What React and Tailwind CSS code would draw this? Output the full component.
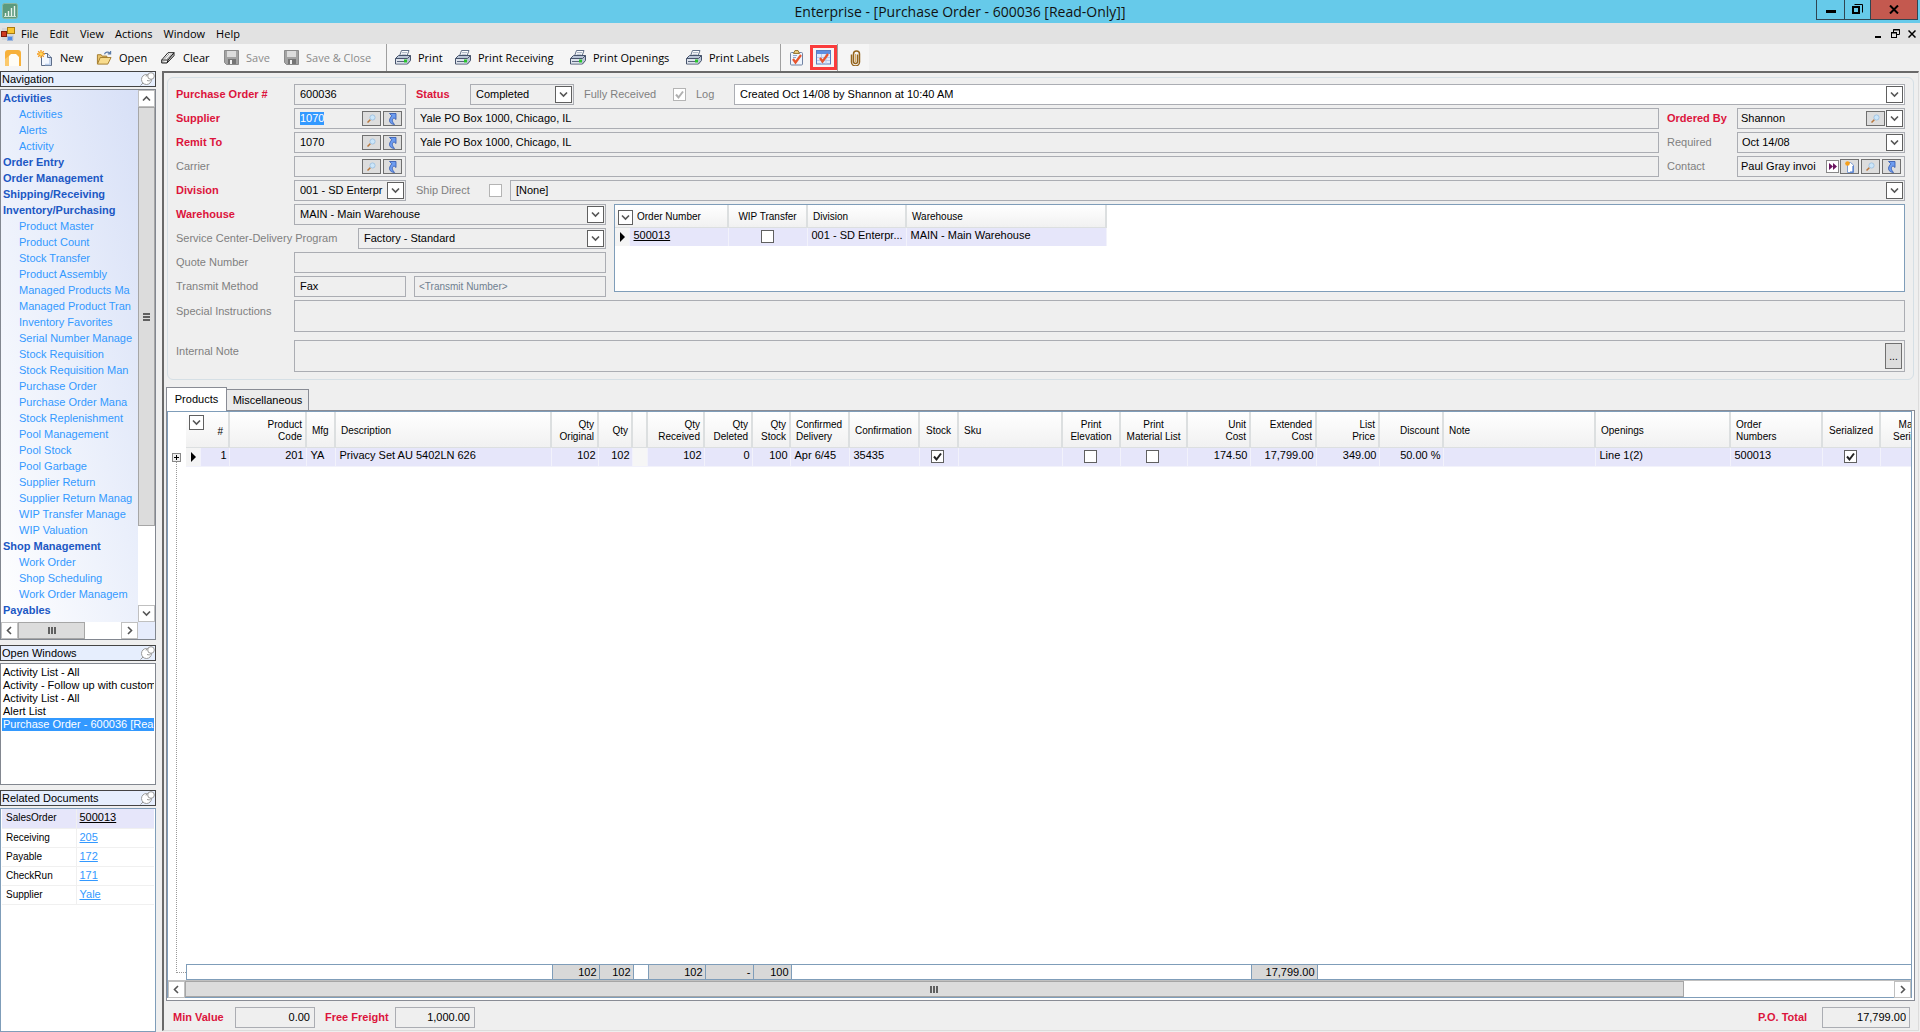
import React, { useEffect, useRef } from 'react'

const NAV = [
  ['Activities', ['Activities', 'Alerts', 'Activity']],
  ['Order Entry', []],
  ['Order Management', []],
  ['Shipping/Receiving', []],
  ['Inventory/Purchasing', [
    'Product Master', 'Product Count', 'Stock Transfer', 'Product Assembly', 'Managed Products Ma',
    'Managed Product Tran', 'Inventory Favorites', 'Serial Number Manage', 'Stock Requisition',
    'Stock Requisition Man', 'Purchase Order', 'Purchase Order Mana', 'Stock Replenishment',
    'Pool Management', 'Pool Stock', 'Pool Garbage', 'Supplier Return', 'Supplier Return Manag',
    'WIP Transfer Manage', 'WIP Valuation',
  ]],
  ['Shop Management', ['Work Order', 'Shop Scheduling', 'Work Order Managem']],
  ['Payables', []],
  ['Receivable Special', []],
]

const OPEN_WINDOWS = [
  'Activity List - All',
  'Activity - Follow up with custome',
  'Activity List - All',
  'Alert List',
  'Purchase Order - 600036 [Read',
]

const RELATED = [
  ['SalesOrder', '500013'],
  ['Receiving', '205'],
  ['Payable', '172'],
  ['CheckRun', '171'],
  ['Supplier', 'Yale'],
]

// label lines, column width, alignment, row value, total
const COLUMNS = [
  { head: ['Product', 'Code'], w: 77, align: 'right', value: '201' },
  { head: ['Mfg'], w: 29, align: 'left', value: 'YA' },
  { head: ['Description'], w: 216, align: 'left', value: 'Privacy Set AU 5402LN 626' },
  { head: ['Qty', 'Original'], w: 47, align: 'right', value: '102', total: '102' },
  { head: ['Qty'], w: 34, align: 'right', value: '102', total: '102' },
  { head: [''], w: 15, blank: true },
  { head: ['Qty', 'Received'], w: 57, align: 'right', value: '102', total: '102' },
  { head: ['Qty', 'Deleted'], w: 48, align: 'right', value: '0', total: '-' },
  { head: ['Qty', 'Stock'], w: 38, align: 'right', value: '100', total: '100' },
  { head: ['Confirmed', 'Delivery'], w: 59, align: 'left', value: 'Apr 6/45' },
  { head: ['Confirmation'], w: 70, align: 'left', value: '35435' },
  { head: ['Stock'], w: 39, align: 'center', check: true, value: true },
  { head: ['Sku'], w: 104, align: 'left', value: '' },
  { head: ['Print', 'Elevation'], w: 58, align: 'center', check: true, value: false },
  { head: ['Print', 'Material List'], w: 67, align: 'center', check: true, value: false },
  { head: ['Unit', 'Cost'], w: 63, align: 'right', value: '174.50' },
  { head: ['Extended', 'Cost'], w: 66, align: 'right', value: '17,799.00', total: '17,799.00' },
  { head: ['List', 'Price'], w: 63, align: 'right', value: '349.00' },
  { head: ['Discount'], w: 64, align: 'right', value: '50.00 %' },
  { head: ['Note'], w: 152, align: 'left', value: '' },
  { head: ['Openings'], w: 135, align: 'left', value: 'Line 1(2)' },
  { head: ['Order', 'Numbers'], w: 92, align: 'left', value: '500013' },
  { head: ['Serialized'], w: 58, align: 'center', check: true, value: true },
  { head: ['Manual', 'Serialized'], w: 70, align: 'center', value: '' },
]

const ALIGN = { left: 'text-left', right: 'text-right', center: 'text-center' }

/* ---------- icons ---------- */

function AppIcon() {
  return (
    <svg width="16" height="16" viewBox="0 0 16 16">
      <rect x="0.5" y="0.5" width="15" height="15" rx="2" fill="#5c9a7d" stroke="#8db8a0" />
      <path d="M3.5 13V10M6.5 13V8M9.5 13V5M12.5 13V3" stroke="#e9f4ee" strokeWidth="1.4" />
      <path d="M2 13.5h12" stroke="#cfe5d8" />
    </svg>
  )
}

function FormIcon() {
  return (
    <svg width="14" height="14" viewBox="0 0 14 14">
      <rect x="1" y="1" width="12" height="12" fill="#d5d5d5" />
      <rect x="6.5" y="0.5" width="7" height="6" fill="#f9c530" stroke="#a97b10" />
      <rect x="0.5" y="4.5" width="5" height="5" fill="#cf3a20" stroke="#7d1b0c" />
      <rect x="6.5" y="9.5" width="5" height="4" fill="#4f8be6" stroke="#9db6dc" />
    </svg>
  )
}

function FolderTabIcon() {
  return (
    <svg width="16" height="16" viewBox="0 0 16 16">
      <path d="M0 16V3a3 3 0 0 1 3-3h10a3 3 0 0 1 3 3v13H0z" fill="#f7b13a" />
      <path d="M4 16V6l2-2h5l3 3v9z" fill="#fffdf6" />
      <path d="M0 16h4V6L0 9z" fill="#fbc96c" />
    </svg>
  )
}

function NewIcon({ size = 16 }) {
  return (
    <svg width={size} height={size} viewBox="0 0 16 16">
      <path d="M4.500 3.500h6l4 4v8h-10z" fill="#f4f8ff" stroke="#5d6d88" />
      <path d="M10.500 3.500v4h4" fill="#cfdcf2" stroke="#5d6d88" />
      <path d="M13 8v6.500H8" fill="none" stroke="#b9cdec" strokeWidth="1.500" />
      <path d="M4 0v8M0 4h8M1.200 1.200l5.600 5.600M6.800 1.200L1.200 6.800" stroke="#f29a1f" strokeWidth="1.300" />
      <circle cx="4" cy="4" r="1.800" fill="#ffd65a" />
    </svg>
  )
}

function SmallNewIcon() {
  return (
    <svg width="10" height="12" viewBox="0 0 10 12">
      <path d="M2.500 1.500h3l3 2.500v7.500h-6z" fill="#fff" stroke="#7d9bd0" />
      <path d="M8 5v6H5" fill="none" stroke="#4c7ad0" strokeWidth="1.200" />
      <circle cx="2.500" cy="2.500" r="2.300" fill="#f6a01c" />
    </svg>
  )
}

function OpenIcon() {
  return (
    <svg width="17" height="16" viewBox="0 0 17 16">
      <path d="M1.500 14V4.500h4l1 1.500h5v2" fill="#e9c46c" stroke="#a17a2b" />
      <path d="M1.500 14.500l3-7h11.500l-3.500 7z" fill="#f8dc8e" stroke="#a17a2b" />
      <path d="M9 4c1-2.500 4-3 6-1M15.500 0.500V3.500h-3" fill="none" stroke="#5d7ca8" strokeWidth="1.300" />
    </svg>
  )
}

function EraserIcon() {
  return (
    <svg width="14" height="12" viewBox="0 0 14 12">
      <path d="M0.700 8L7 0.700h6L7 8z" fill="#fff" stroke="#222" />
      <path d="M0.700 8v3h5.300L7 8l6-7.300v3L6 11" fill="#c8c8c8" stroke="#222" />
      <path d="M3.500 7l4.500-5M6 7l4.500-5" stroke="#999" />
    </svg>
  )
}

function SaveIcon() {
  return (
    <svg width="15" height="15" viewBox="0 0 15 15">
      <path d="M0.500 0.500h14v14h-12l-2-2z" fill="#a3a3a3" stroke="#8b8b8b" />
      <rect x="3" y="1" width="9" height="6" fill="#dcdcdc" />
      <rect x="4" y="9" width="8" height="5" fill="#747474" />
      <rect x="6" y="10" width="2" height="4" fill="#f0f0f0" />
    </svg>
  )
}

function PrinterIcon() {
  return (
    <svg width="16" height="15" viewBox="0 0 16 15">
      <path d="M4.500 6L6.500 0.500h7.500L12 6z" fill="#fdfdfd" stroke="#62718a" />
      <path d="M7 2.500h5M6.500 4.300h5" stroke="#9aa7bb" strokeWidth="0.800" />
      <path d="M0.500 8.500l3-3h12v5l-3 3.500h-12z" fill="#b9c4d6" stroke="#46536b" />
      <path d="M0.500 8.500h12l3-3" fill="none" stroke="#46536b" />
      <path d="M1 9h11v4.500H1z" fill="#dde3ec" />
      <path d="M2 11.500h7" stroke="#59667c" />
      <rect x="9" y="9.500" width="3" height="3" fill="#29c42d" />
    </svg>
  )
}

function ClipboardIcon() {
  return (
    <svg width="15" height="16" viewBox="0 0 15 16">
      <rect x="1.500" y="2.500" width="12" height="12.500" rx="1" fill="#eef4fd" stroke="#7183a3" />
      <path d="M4.500 3.500l1.500-3h3l1.500 3z" fill="#e8c879" stroke="#9a7a36" />
      <path d="M4 5.500h4M4 7.500h3" stroke="#8fa6cc" />
      <path d="M4 9l2.500 3.500L12 5" fill="none" stroke="#e8552d" strokeWidth="2.200" />
    </svg>
  )
}

function GridCheckIcon() {
  return (
    <svg width="15" height="15" viewBox="0 0 15 15">
      <rect x="0.500" y="0.500" width="14" height="13.500" fill="#e3ecfa" stroke="#5a7dbd" />
      <rect x="1" y="1" width="13" height="3" fill="#5f8fe0" />
      <path d="M1 7.500h13M1 10.500h13M5.500 4v10M10 4v10" stroke="#b6cbee" />
      <path d="M4 8l2.500 3.500L12 4" fill="none" stroke="#e8552d" strokeWidth="2.200" />
    </svg>
  )
}

function PaperclipIcon() {
  return (
    <svg width="11" height="16" viewBox="0 0 11 16">
      <path
        d="M7.500 4.500v7a2 2 0 0 1-4 0V4a3 3 0 0 1 6 0v8a4 4 0 0 1-8 0V4.500"
        fill="none" stroke="#94641c" strokeWidth="1.500"
      />
      <path d="M5.500 4v8" stroke="#d9ad62" />
    </svg>
  )
}

function PinIcon() {
  return (
    <svg width="15" height="14" viewBox="0 0 15 14" fill="#fff" stroke="#9a9a9a">
      <path d="M0.500 13.500l3-3" />
      <circle cx="6.500" cy="7.500" r="5" />
      <path d="M6 4.500a3 3 0 0 1 5-1.500v4.500a3 3 0 0 1-4 1" />
      <circle cx="11" cy="4" r="3.300" />
    </svg>
  )
}

function SearchIcon() {
  return (
    <svg width="9" height="9" viewBox="0 0 9 9">
      <path d="M0.500 8.500l3-3" stroke="#b9773c" strokeWidth="1.500" />
      <circle cx="5.500" cy="3.500" r="2.600" fill="#cbe6fa" stroke="#a3c4e2" />
    </svg>
  )
}

function GotoIcon() {
  return (
    <svg width="9" height="12" viewBox="0 0 9 12">
      <path d="M1.500 0.500h6.500v6L6 4.800C3.500 6.500 4 8.500 6.500 11.500 1 11 0 7 3.800 2.800z" fill="#6d9cf0" stroke="#2f56ad" strokeWidth="0.800" />
    </svg>
  )
}

function Chevron({ dir = 'down', className = '' }) {
  const d = {
    down: 'M1 2.500l3.500 3.500L8 2.500',
    up: 'M1 6.500L4.500 3 8 6.500',
    left: 'M6 1L2.500 4.500 6 8',
    right: 'M3 1l3.500 3.500L3 8',
  }[dir]
  return (
    <svg width="9" height="9" viewBox="0 0 9 9" className={className}>
      <path d={d} fill="none" stroke="#555" strokeWidth="1.600" />
    </svg>
  )
}

/* ---------- form pieces ---------- */

function Label({ htmlFor, required, className = '', children }) {
  const tone = required ? 'font-bold text-[#dc143c]' : 'text-[#7f7f7f]'
  return <label htmlFor={htmlFor} className={`shrink-0 whitespace-nowrap ${tone} ${className}`}>{children}</label>
}

function Box({ className = '', children }) {
  return <div className={`flex h-[21px] items-center border border-[#abadb3] pr-px ${className}`}>{children}</div>
}

function TextBox({ id, label, value = '', className = '', inputClass = 'px-[5px]', children }) {
  return (
    <Box className={className}>
      <input id={id} aria-label={label} readOnly value={value} className={`h-[13px] w-full min-w-0 flex-1 bg-transparent leading-[13px] outline-none ${inputClass}`} />
      {children}
    </Box>
  )
}

function DropBox({ id, label, value, className = '', children }) {
  return (
    <Box className={`relative ${className}`}>
      <select id={id} aria-label={label} className="h-full w-full min-w-0 flex-1 appearance-none overflow-hidden bg-transparent pl-[5px] outline-none">
        <option>{value}</option>
      </select>
      {children}
      <span className="pointer-events-none flex size-[17px] shrink-0 items-center justify-center border border-[#606060] bg-white">
        <Chevron />
      </span>
    </Box>
  )
}

function IconButton({ title, children }) {
  return (
    <button type="button" aria-label={title} className="mr-[2px] flex h-[15px] w-[19px] shrink-0 items-center justify-center border border-[#707070] bg-[#dddddd]">
      {children}
    </button>
  )
}

function Lookup({ name }) {
  return (
    <>
      <IconButton title={`Find ${name}`}><SearchIcon /></IconButton>
      <IconButton title={`Go to ${name}`}><GotoIcon /></IconButton>
    </>
  )
}

function Tick({ id, label, checked, faded }) {
  return (
    <span className="relative flex size-[13px] shrink-0">
      <input
        id={id} type="checkbox" aria-label={label} readOnly checked={checked}
        className={`size-[13px] appearance-none border bg-white ${faded ? 'border-[#b4b4b4]' : 'border-[#606060]'}`}
      />
      {checked && (
        <svg width="13" height="13" viewBox="0 0 13 13" className="pointer-events-none absolute inset-0">
          <path d="M3 6.500l2.500 3L10 3.500" fill="none" stroke={faded ? '#b0b0b0' : '#222'} strokeWidth="2" />
        </svg>
      )}
    </span>
  )
}

/* ---------- chrome ---------- */

function TitleBar() {
  return (
    <header className="relative flex h-[23px] shrink-0 items-start justify-between bg-[#66caea] pl-[2px] pr-[2px]">
      <span className="pt-[3px]"><AppIcon /></span>
      <h1 className="absolute inset-x-0 text-center font-['Open_Sans',sans-serif] text-[14px] leading-6 text-[#111]">
        Enterprise - [Purchase Order - 600036 [Read-Only]]
      </h1>
      <div className="relative flex h-[20px] border border-t-0 border-[#2f4552]">
        <button type="button" aria-label="Minimize" className="flex w-[28px] items-center justify-center border-r border-[#2f4552]">
          <span className="mt-1 h-[3px] w-[10px] bg-black" />
        </button>
        <button type="button" aria-label="Restore" className="flex w-[26px] items-center justify-center border-r border-[#2f4552]">
          <svg width="11" height="11" viewBox="0 0 11 11" fill="none" stroke="#000">
            <path d="M2.500 0.500h8v8" />
            <rect x="1" y="3" width="6" height="6" strokeWidth="2" />
          </svg>
        </button>
        <button type="button" aria-label="Close" className="flex w-[46px] items-center justify-center bg-[#c4594f]">
          <svg width="10" height="9" viewBox="0 0 10 9"><path d="M1 0.500l8 8M9 0.500l-8 8" stroke="#000" strokeWidth="2" /></svg>
        </button>
      </div>
    </header>
  )
}

function MenuBar() {
  return (
    <div className="flex h-[21px] shrink-0 items-center justify-between bg-[#e2e2e2] pl-px pr-1 font-['Open_Sans',sans-serif] text-[11px]">
      <div className="flex items-center">
        <FormIcon />
        <nav className="ml-[6px] flex gap-[11px]">
          {['File', 'Edit', 'View', 'Actions', 'Window', 'Help'].map((m) => <button key={m} type="button">{m}</button>)}
        </nav>
      </div>
      <div className="flex items-center gap-2">
        <button type="button" aria-label="Minimize document" className="flex h-[9px] w-2 items-end"><span className="h-[2px] w-[6px] bg-black" /></button>
        <button type="button" aria-label="Restore document">
          <svg width="9" height="9" viewBox="0 0 9 9" fill="none" stroke="#000"><path d="M2.500 3V0.500h6V5.500H6M2 1h7" /><rect x="0.500" y="3.500" width="5" height="5" /><path d="M0 4h6" /></svg>
        </button>
        <button type="button" aria-label="Close document">
          <svg width="8" height="8" viewBox="0 0 8 8"><path d="M0.500 0.500l7 7M7.500 0.500l-7 7" stroke="#000" strokeWidth="1.500" /></svg>
        </button>
      </div>
    </div>
  )
}

function Tool({ icon, width, disabled, children }) {
  return (
    <button type="button" disabled={disabled} className={`flex items-center gap-[7px] whitespace-nowrap ${width} ${disabled ? 'text-[#8b8b8b]' : ''}`}>
      <span className="flex w-4 shrink-0 justify-center">{icon}</span>
      {children}
    </button>
  )
}

function ToolBar() {
  const rule = <span className="h-full w-px bg-[#9f9f9f]" />
  return (
    <div className="flex h-[27px] shrink-0 bg-[#efefef] font-['Open_Sans',sans-serif] text-[11px]">
      <div className="flex items-center bg-[#f5f5f5] pl-[5px] pr-2">
        <button type="button" aria-label="Home" className="w-[23px]"><FolderTabIcon /></button>
        {rule}
        <div className="flex h-full pl-2">
          <Tool icon={<NewIcon />} width="w-[59px]">New</Tool>
          <Tool icon={<OpenIcon />} width="w-[64px]">Open</Tool>
          <Tool icon={<EraserIcon />} width="w-[63px]">Clear</Tool>
          <Tool icon={<SaveIcon />} width="w-[60px]" disabled>Save</Tool>
          <Tool icon={<SaveIcon />} width="w-[103px]" disabled>Save &amp; Close</Tool>
        </div>
        {rule}
        <div className="flex h-full pl-2">
          <Tool icon={<PrinterIcon />} width="w-[60px]">Print</Tool>
          <Tool icon={<PrinterIcon />} width="w-[115px]">Print Receiving</Tool>
          <Tool icon={<PrinterIcon />} width="w-[116px]">Print Openings</Tool>
          <Tool icon={<PrinterIcon />} width="w-[94px]">Print Labels</Tool>
        </div>
        {rule}
        <button type="button" aria-label="Tasks" className="ml-2"><ClipboardIcon /></button>
        <button type="button" aria-label="Schedule" className="ml-[6px] flex h-[25px] w-[27px] items-center justify-center border-3 border-[#fa3c3c]"><GridCheckIcon /></button>
        {rule}
        <button type="button" aria-label="Attachments" className="ml-3"><PaperclipIcon /></button>
      </div>
    </div>
  )
}

/* ---------- sidebar ---------- */

function PanelTitle({ children }) {
  return (
    <h2 className="flex h-4 shrink-0 items-center justify-between border border-[#444] bg-[#e6eefd] pl-px leading-[14px]">
      {children}
      <PinIcon />
    </h2>
  )
}

function ScrollButton({ dir, className = '' }) {
  return (
    <button type="button" aria-label={`Scroll ${dir}`} className={`flex size-[17px] shrink-0 items-center justify-center border border-[#c0c0c0] bg-white ${className}`}>
      <Chevron dir={dir} />
    </button>
  )
}

function Grip({ vertical }) {
  return (
    <span className={`flex gap-px ${vertical ? 'flex-col' : ''}`}>
      {[0, 1, 2].map((i) => <i key={i} className={vertical ? 'h-[2px] w-[7px] bg-[#606060]' : 'h-[7px] w-[2px] bg-[#606060]'} />)}
    </span>
  )
}

function Sidebar() {
  return (
    <aside className="flex w-[156px] shrink-0 flex-col">
      <PanelTitle>Navigation</PanelTitle>
      <div className="mt-[2px] flex min-h-0 flex-1 flex-col border border-[#828790] bg-linear-to-tr from-white via-[#eaeffb] to-[#d5def6]">
        <div className="flex min-h-0 flex-1">
          <nav className="min-w-0 flex-1 overflow-hidden whitespace-nowrap leading-4">
            {NAV.map(([group, items]) => (
              <div key={group}>
                <a href="#" className="block pl-[2px] font-bold text-[#1c58c4]">{group}</a>
                {items.map((item) => <a key={item} href="#" className="block pl-[18px] text-[#3399ff]">{item}</a>)}
              </div>
            ))}
          </nav>
          <div className="flex w-[17px] flex-col bg-white">
            <ScrollButton dir="up" />
            <div className="flex h-[419px] items-center justify-center border border-[#a6a6a6] bg-[#dcdcdc]"><Grip vertical /></div>
            <ScrollButton dir="down" className="mt-auto" />
          </div>
        </div>
        <div className="flex h-[17px] shrink-0">
          <div className="flex flex-1 justify-between bg-white">
            <ScrollButton dir="left" />
            <div className="mr-auto flex w-[67px] items-center justify-center border border-[#a6a6a6] bg-[#dcdcdc]"><Grip /></div>
            <ScrollButton dir="right" />
          </div>
          <div className="w-[17px] bg-[#e6ecfc]" />
        </div>
      </div>

      <div className="mt-[5px] flex flex-col gap-[2px]">
        <PanelTitle>Open Windows</PanelTitle>
        <ul className="h-[122px] overflow-hidden whitespace-nowrap border border-[#828790] bg-white p-px pt-[2px] leading-[13px]">
          {OPEN_WINDOWS.map((w, i) => (
            <li key={i} className={`overflow-hidden pl-px ${i === 4 ? 'bg-[#3399ff] text-white' : ''}`}>{w}</li>
          ))}
        </ul>
      </div>

      <div className="mt-[5px] flex flex-col gap-[2px]">
        <PanelTitle>Related Documents</PanelTitle>
        <div className="h-[224px] border border-[#7f9db9] bg-white px-px">
          <table className="w-full table-fixed">
            <tbody>
              {RELATED.map(([kind, doc], i) => (
                <tr key={kind} className={`h-[19px] border-b border-[#f0f0f0] ${i === 0 ? 'bg-[#e6e6fa]' : ''}`}>
                  <th className="w-[74px] border-r border-[#f0f0f0] pb-px pl-1 text-left text-[10px] font-normal">{kind}</th>
                  <td className="pb-px pl-[3px]"><a href="#" className={`underline ${i === 0 ? '' : 'text-[#3399ff]'}`}>{doc}</a></td>
                </tr>
              ))}
            </tbody>
          </table>
        </div>
      </div>
    </aside>
  )
}

/* ---------- order header ---------- */

const HEAD_CELL = 'border-r-2 border-b border-[#dcdfe0] bg-linear-to-b from-white to-[#f1f1f1] font-normal text-[10px] leading-[12px]'

function OrdersGrid() {
  return (
    <div className="min-w-0 flex-1 border border-[#7f9db9] bg-white">
      <table className="w-[491px] table-fixed">
        <colgroup>
          <col className="w-[14px]" /><col className="w-[99px]" /><col className="w-[79px]" /><col className="w-[99px]" /><col className="w-[200px]" />
        </colgroup>
        <thead>
          <tr className="h-[22px] [&>th]:pt-[3px]">
            <th colSpan={2} className={`${HEAD_CELL} text-left`}>
              <span className="flex items-center gap-1 pl-[3px]">
                <button type="button" aria-label="Choose columns" className="flex size-[15px] items-center justify-center border border-[#606060] bg-white"><Chevron /></button>
                Order Number
              </span>
            </th>
            <th className={`${HEAD_CELL} whitespace-nowrap text-center`}>WIP Transfer</th>
            <th className={`${HEAD_CELL} pl-[5px] text-left`}>Division</th>
            <th className={`${HEAD_CELL} pl-[5px] text-left`}>Warehouse</th>
          </tr>
        </thead>
        <tbody>
          <tr className="h-[19px] bg-[#e6e6fa] [&>td]:border-r [&>td]:border-[#f2f2fb]">
            <td className="bg-[#f4f4f4]"><span className="ml-[5px] block size-0 border-y-5 border-l-5 border-y-transparent border-l-black" /></td>
            <td className="pb-1 pl-1"><a href="#" className="block leading-[14px] underline">500013</a></td>
            <td><span className="flex justify-center"><Tick label="WIP Transfer" checked={false} /></span></td>
            <td className="truncate pb-1 pl-1 leading-[14px]">001 - SD Enterpr...</td>
            <td className="pb-1 pl-1 leading-[14px]">MAIN - Main Warehouse</td>
          </tr>
        </tbody>
      </table>
    </div>
  )
}

function OrderForm() {
  const supplier = useRef(null)

  // the supplier code opens focused with its text selected
  useEffect(() => {
    const el = supplier.current.querySelector('input')
    el.focus()
    el.select()
  }, [])

  const row = 'flex items-center'
  return (
    <form className="ml-[3px] mr-1 mt-1 flex flex-col gap-[3px] rounded-md border border-[#d5dfe5] pb-[7px] pl-2 pr-2 pt-[6px]">
      <div className={row}>
        <Label htmlFor="po" required className="w-[118px]">Purchase Order #</Label>
        <TextBox id="po" value="600036" className="w-[112px]" />
        <Label htmlFor="status" required className="ml-[10px] w-[54px]">Status</Label>
        <DropBox id="status" value="Completed" className="w-[104px]" />
        <Label htmlFor="received" className="ml-[10px] w-[89px]">Fully Received</Label>
        <Tick id="received" checked faded />
        <Label htmlFor="log" className="ml-[10px] w-[38px]">Log</Label>
        <DropBox id="log" value="Created Oct 14/08 by Shannon at 10:40 AM" className="min-w-0 flex-1 bg-white" />
      </div>

      <div className="flex gap-2">
        <div className="flex min-w-0 flex-1 flex-col gap-[3px]">
          <div className={row} ref={supplier}>
            <Label htmlFor="supplier" required className="w-[118px]">Supplier</Label>
            <TextBox id="supplier" value="1070" className="mr-2 w-[112px]" inputClass="px-[5px] caret-[#d07020] selection:bg-[#3399ff] selection:text-white"><Lookup name="supplier" /></TextBox>
            <TextBox label="Supplier address" value="Yale PO Box 1000, Chicago, IL" className="min-w-0 flex-1" />
          </div>
          <div className={row}>
            <Label htmlFor="remit" required className="w-[118px]">Remit To</Label>
            <TextBox id="remit" value="1070" className="mr-2 w-[112px]"><Lookup name="remit to" /></TextBox>
            <TextBox label="Remit address" value="Yale PO Box 1000, Chicago, IL" className="min-w-0 flex-1" />
          </div>
          <div className={row}>
            <Label htmlFor="carrier" className="w-[118px]">Carrier</Label>
            <TextBox id="carrier" className="mr-2 w-[112px]"><Lookup name="carrier" /></TextBox>
            <TextBox label="Carrier address" className="min-w-0 flex-1" />
          </div>
        </div>
        <div className="flex w-[238px] flex-col gap-[3px]">
          <div className={row}>
            <Label htmlFor="by" required className="w-[70px]">Ordered By</Label>
            <DropBox id="by" value="Shannon" className="min-w-0 flex-1 [&>select]:pl-[3px]">
              <span className="-mr-px flex"><IconButton title="Find buyer"><SearchIcon /></IconButton></span>
            </DropBox>
          </div>
          <div className={row}>
            <Label htmlFor="required" className="w-[70px]">Required</Label>
            <DropBox id="required" value="Oct 14/08" className="min-w-0 flex-1 [&>select]:pl-1" />
          </div>
          <div className={row}>
            <Label htmlFor="contact" className="w-[70px]">Contact</Label>
            <TextBox id="contact" value="Paul Gray invoi" className="min-w-0 flex-1" inputClass="pl-[3px]">
              <button type="button" aria-label="More" className="mr-px flex size-[13px] shrink-0 items-center justify-center border border-[#888] bg-white">
                <svg width="8" height="7" viewBox="0 0 8 7" fill="#6b1560"><path d="M0 0l4 3.500L0 7zM4 0l4 3.500L4 7z" /></svg>
              </button>
              <IconButton title="New contact"><SmallNewIcon /></IconButton>
              <Lookup name="contact" />
            </TextBox>
          </div>
        </div>
      </div>

      <div className={row}>
        <Label htmlFor="division" required className="w-[118px]">Division</Label>
        <DropBox id="division" value="001 - SD Enterpr" className="w-[112px]" />
        <Label htmlFor="direct" className="ml-[10px] w-[73px]">Ship Direct</Label>
        <Tick id="direct" checked={false} faded />
        <DropBox label="Ship direct to" value="[None]" className="ml-2 min-w-0 flex-1" />
      </div>

      <div className="flex gap-2">
        <div className="flex w-[430px] flex-col gap-[3px]">
          <div className={row}>
            <Label htmlFor="warehouse" required className="w-[118px]">Warehouse</Label>
            <DropBox id="warehouse" value="MAIN - Main Warehouse" className="flex-1" />
          </div>
          <div className={row}>
            <Label htmlFor="program" className="w-[182px]">Service Center-Delivery Program</Label>
            <DropBox id="program" value="Factory - Standard" className="flex-1" />
          </div>
          <div className={row}>
            <Label htmlFor="quote" className="w-[118px]">Quote Number</Label>
            <TextBox id="quote" className="flex-1" />
          </div>
          <div className={row}>
            <Label htmlFor="transmit" className="w-[118px]">Transmit Method</Label>
            <TextBox id="transmit" value="Fax" className="mr-2 w-[112px]" />
            <TextBox label="Transmit number" value="<Transmit Number>" className="flex-1" inputClass="px-1 text-[10px] text-[#708090]" />
          </div>
        </div>
        <div className="flex min-w-0 flex-1 pb-[5px]"><OrdersGrid /></div>
      </div>

      <div className="flex">
        <Label htmlFor="special" className="w-[118px] pt-[5px]">Special Instructions</Label>
        <textarea id="special" readOnly className="h-8 flex-1 resize-none border border-[#abadb3] px-[5px]" />
      </div>
      <div className="mt-[5px] flex">
        <Label htmlFor="note" className="w-[118px] pt-[5px]">Internal Note</Label>
        <div className="flex h-8 flex-1 items-center border border-[#abadb3] pr-[2px]">
          <textarea id="note" readOnly className="h-full flex-1 resize-none px-[5px]" />
          <button type="button" aria-label="Edit note" className="h-[26px] w-[17px] border border-[#707070] bg-[#dddddd] text-[10px]">...</button>
        </div>
      </div>
    </form>
  )
}

/* ---------- products ---------- */

function ProductCols() {
  return (
    <colgroup>
      <col className="w-[14px]" />
      <col className="w-[29px]" />
      {COLUMNS.map((c, i) => <col key={i} style={{ width: c.w }} />)}
    </colgroup>
  )
}

function ProductsGrid() {
  return (
    <div className="flex min-h-0 flex-1 flex-col border border-[#7f9db9] bg-white">
      <div className="flex min-h-0 flex-1">
        <div className="flex w-[18px] shrink-0 flex-col pb-[7px] pl-1 pt-[41px]">
          <button type="button" aria-label="Expand row" className="size-[9px]">
            <svg width="9" height="9" viewBox="0 0 9 9"><rect x="0.500" y="0.500" width="8" height="8" fill="#eee" stroke="#888" /><path d="M2 4.500h5M4.500 2v5" stroke="#000" /></svg>
          </button>
          <div className="ml-1 flex-1 border-b border-l border-dotted border-[#999]" />
        </div>
        <div className="flex min-w-0 flex-1 flex-col overflow-hidden">
          <table className="w-[1764px] table-fixed">
            <ProductCols />
            <thead>
              <tr className="h-[35px]">
                <th colSpan={2} className={`${HEAD_CELL} align-top`}>
                  <span className="flex items-start justify-between pl-[3px] pr-[5px] pt-[3px]">
                    <button type="button" aria-label="Choose columns" className="flex size-[15px] items-center justify-center border border-[#606060] bg-white"><Chevron /></button>
                    <span className="pt-[11px]">#</span>
                  </span>
                </th>
                {COLUMNS.map((c, i) => (
                  <th key={i} className={`${HEAD_CELL} whitespace-nowrap pt-1 ${c.align === 'center' ? 'px-0' : 'pl-[5px] pr-[3px]'} ${ALIGN[c.align]}`}>
                    {c.head.map((line, n) => <span key={n} className="block">{line}</span>)}
                  </th>
                ))}
              </tr>
            </thead>
            <tbody>
              <tr className="h-[19px] bg-[#e6e6fa] [&>td]:border-r [&>td]:border-b [&>td]:border-[#f2f2fb]">
                <td className="bg-[#f4f4f4]"><span className="ml-[5px] block size-0 border-y-5 border-l-5 border-y-transparent border-l-black" /></td>
                <td className="pb-1 pr-[2px] text-right leading-[14px]">1</td>
                {COLUMNS.map((c, i) => (
                  <td key={i} className={`whitespace-nowrap leading-[14px] ${c.blank ? 'bg-[#f6f6f6]' : ''} ${c.align === 'left' ? 'pl-1' : 'pr-[2px]'} ${ALIGN[c.align]}`}>
                    {c.check
                      ? <span className="flex justify-center"><Tick label={c.head.join(' ')} checked={c.value} /></span>
                      : <span className="block pb-1">{c.value}</span>}
                  </td>
                ))}
              </tr>
            </tbody>
          </table>
          <div className="mt-auto overflow-hidden border-y border-l border-[#7f9db9]">
            <table className="w-[1764px] table-fixed">
              <ProductCols />
              <tbody>
                <tr className="h-[14px]">
                  <td colSpan={2} />
                  {COLUMNS.map((c, i) => (
                    <td key={i} className={`pr-[2px] text-right leading-[14px] ${c.total ? 'border-x border-[#7f9db9] bg-[#d8d8d8]' : ''}`}>{c.total}</td>
                  ))}
                </tr>
              </tbody>
            </table>
          </div>
        </div>
      </div>
      <div className="flex h-[17px] shrink-0 border-t border-[#c0c0c0]">
        <ScrollButton dir="left" />
        <div className="flex h-4 w-[86%] items-center justify-center border border-[#a6a6a6] bg-[#dcdcdc]"><Grip /></div>
        <ScrollButton dir="right" className="ml-auto" />
      </div>
    </div>
  )
}

function Footer() {
  return (
    <footer className="flex shrink-0 items-center pb-[2px] pl-[9px] pr-2 pt-[6px] [&_input]:text-right">
      <Label htmlFor="min" required className="w-[62px]">Min Value</Label>
      <TextBox id="min" value="0.00" className="w-[80px]" inputClass="px-[3px]" />
      <Label htmlFor="freight" required className="ml-[10px] w-[70px]">Free Freight</Label>
      <TextBox id="freight" value="1,000.00" className="w-[80px]" inputClass="px-[3px]" />
      <Label htmlFor="total" required className="ml-auto w-[64px]">P.O. Total</Label>
      <TextBox id="total" value="17,799.00" className="w-[88px]" inputClass="px-[2px]" />
    </footer>
  )
}

export default function App() {
  return (
    <div className="flex h-screen flex-col overflow-hidden bg-[#efefef] font-['Liberation_Sans',Arial,sans-serif] text-[11px] leading-[13px] text-black">
      <TitleBar />
      <MenuBar />
      <ToolBar />
      <div className="flex min-h-0 flex-1 gap-[6px]">
        <Sidebar />
        <main className="mb-px mr-px flex min-w-0 flex-1 flex-col border-l-2 border-t-2 border-b border-r border-[#696969] border-b-[#dcdcdc] border-r-[#dcdcdc]">
          <OrderForm />
          <div className="relative z-10 ml-[2px] mt-[7px] flex items-end" role="tablist">
            <button type="button" role="tab" aria-selected="true" className="-mb-px h-6 w-[61px] border border-b-0 border-[#898c95] bg-white pb-px">Products</button>
            <button type="button" role="tab" aria-selected="false" className="h-[21px] w-[82px] border border-b-0 border-l-0 border-[#898c95] bg-[#ebebeb] pt-px">Miscellaneous</button>
          </div>
          <div className="ml-[2px] mr-[3px] flex min-h-0 flex-1 flex-col border border-[#898c95] bg-white pb-[2px] pr-[2px]">
            <ProductsGrid />
          </div>
          <Footer />
        </main>
      </div>
    </div>
  )
}
